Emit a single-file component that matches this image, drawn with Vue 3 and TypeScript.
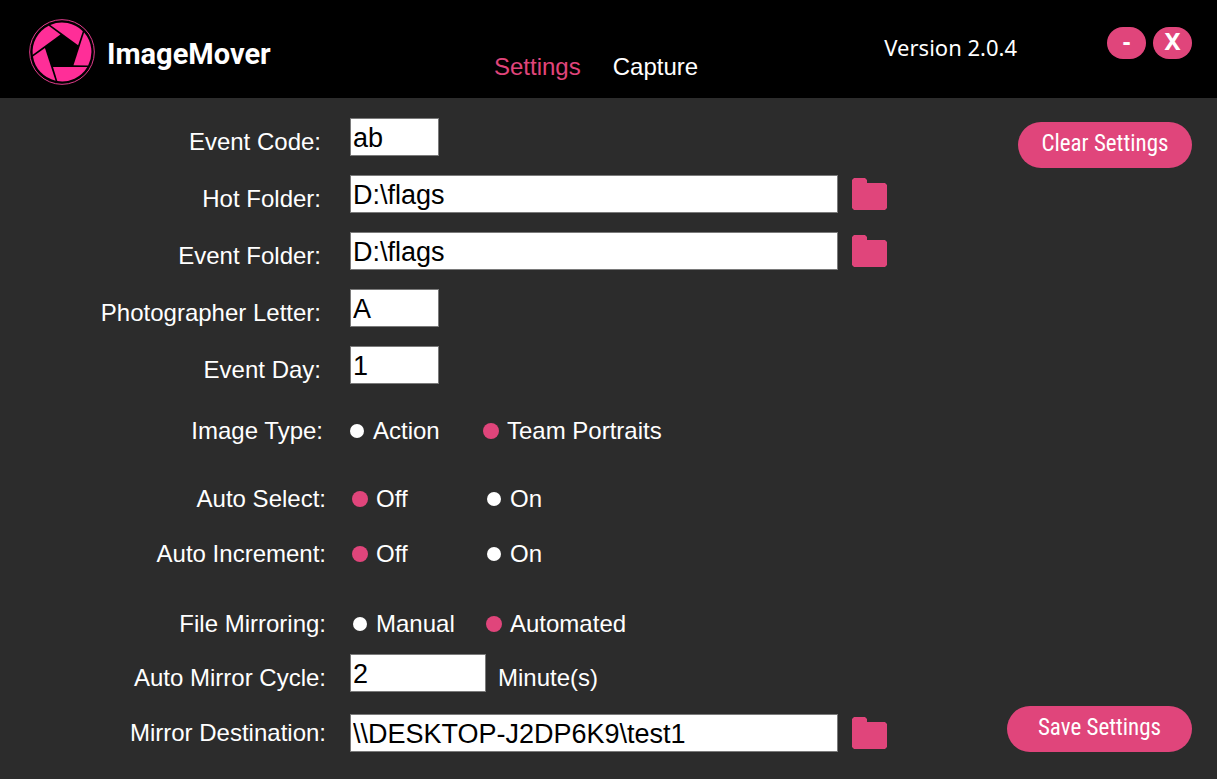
<script setup lang="ts">
import { reactive, ref } from 'vue'

interface Choice {
  key: 'imageType' | 'autoSelect' | 'autoIncrement' | 'mirroring'
  label: string
  options: string[]
}

const tabs = ['Settings', 'Capture']
const activeTab = ref('Settings')
const bladeAngles = [0, 72, 144, 216, 288]

const form = reactive({
  eventCode: 'ab',
  hotFolder: 'D:\\flags',
  eventFolder: 'D:\\flags',
  letter: 'A',
  day: '1',
  imageType: 'Team Portraits',
  autoSelect: 'Off',
  autoIncrement: 'Off',
  mirroring: 'Automated',
  cycle: '2',
  destination: '\\\\DESKTOP-J2DP6K9\\test1',
})

type TextKey = 'eventCode' | 'hotFolder' | 'eventFolder' | 'letter' | 'day'

const fields: { key: TextKey; label: string; folder: boolean }[] = [
  { key: 'eventCode', label: 'Event Code:', folder: false },
  { key: 'hotFolder', label: 'Hot Folder:', folder: true },
  { key: 'eventFolder', label: 'Event Folder:', folder: true },
  { key: 'letter', label: 'Photographer Letter:', folder: false },
  { key: 'day', label: 'Event Day:', folder: false },
]

const groups: { name: string; rows: Choice[] }[] = [
  { name: 'type', rows: [{ key: 'imageType', label: 'Image Type:', options: ['Action', 'Team Portraits'] }] },
  {
    name: 'auto',
    rows: [
      { key: 'autoSelect', label: 'Auto Select:', options: ['Off', 'On'] },
      { key: 'autoIncrement', label: 'Auto Increment:', options: ['Off', 'On'] },
    ],
  },
  { name: 'mirror', rows: [{ key: 'mirroring', label: 'File Mirroring:', options: ['Manual', 'Automated'] }] },
]

function clearSettings() {
  for (const f of fields) form[f.key] = ''
  form.cycle = ''
  form.destination = ''
}
</script>

<template>
  <div class="app">
    <header class="bar">
      <div class="brand">
        <svg class="logo" viewBox="9 8 198 198" aria-hidden="true">
          <circle cx="108" cy="107" r="97" fill="none" stroke="#e23c8c" stroke-width="3" />
          <path
            v-for="a in bladeAngles" :key="a" :transform="`rotate(${a} 108 107)`"
            d="M81 152H184A88 88 0 0 1 94 194Z" fill="#ff2e98"
          />
        </svg>
        <span class="name">ImageMover</span>
      </div>
      <nav class="tabs">
        <a
          v-for="t in tabs" :key="t" href="#" :class="{ active: t === activeTab }"
          @click.prevent="activeTab = t"
        >{{ t }}</a>
      </nav>
      <span class="version">Version 2.0.4</span>
      <div class="window">
        <button type="button" aria-label="Minimize">-</button>
        <button type="button" aria-label="Close">X</button>
      </div>
    </header>

    <form class="main" @submit.prevent>
      <div class="settings">
        <div class="fields">
          <div v-for="f in fields" :key="f.key" class="row">
            <label class="caption" :for="f.key">{{ f.label }}</label>
            <div class="control">
              <input
                :id="f.key" v-model="form[f.key]" type="text" class="text"
                :class="f.folder ? 'wide' : 'short'"
              >
              <button v-if="f.folder" type="button" class="folder" :aria-label="'Browse ' + f.label">
                <svg viewBox="0 0 35 32"><path d="M2 0H13L15 2V5H33L35 7V30L33 32H2L0 30V2Z" /></svg>
              </button>
            </div>
          </div>
        </div>

        <div v-for="g in groups" :key="g.name" class="choices" :class="g.name">
          <div
            v-for="c in g.rows" :key="c.key" class="row" role="radiogroup"
            :aria-labelledby="c.key"
          >
            <span :id="c.key" class="caption">{{ c.label }}</span>
            <div class="control">
              <label v-for="o in c.options" :key="o" class="option">
                <input v-model="form[c.key]" type="radio" :name="c.key" :value="o">
                <span>{{ o }}</span>
              </label>
            </div>
          </div>
        </div>

        <div class="paths">
          <div class="row">
            <label class="caption" for="cycle">Auto Mirror Cycle:</label>
            <div class="control">
              <input id="cycle" v-model="form.cycle" type="text" class="text medium">
              <span class="unit">Minute(s)</span>
            </div>
          </div>
          <div class="row centered">
            <label class="caption" for="destination">Mirror Destination:</label>
            <div class="control">
              <input id="destination" v-model="form.destination" type="text" class="text wide">
              <button type="button" class="folder" aria-label="Browse mirror destination">
                <svg viewBox="0 0 35 32"><path d="M2 0H13L15 2V5H33L35 7V30L33 32H2L0 30V2Z" /></svg>
              </button>
            </div>
          </div>
        </div>
      </div>

      <div class="actions">
        <button type="button" class="pill" @click="clearSettings">Clear Settings</button>
        <button type="submit" class="pill save">Save Settings</button>
      </div>
    </form>
  </div>
</template>

<style>
body {
  margin: 0;
  background: #2c2c2c;
}
</style>

<style scoped>
.app {
  --pink: #e0457b;
  display: flex;
  flex-direction: column;
  min-height: 100vh;
  background: #2c2c2c;
  color: #fff;
  font: 24px/28px "Liberation Sans", Arial, sans-serif;
}
.app * {
  box-sizing: border-box;
}
button,
input {
  margin: 0;
  font: inherit;
}
button {
  padding: 0;
  border: 0;
  background: var(--pink);
  color: #fff;
  cursor: pointer;
}
.bar {
  display: flex;
  align-items: flex-start;
  height: 98px;
  padding: 0 25px 0 29px;
  background: #000;
}
.brand {
  display: flex;
  align-items: center;
  gap: 12px;
  width: 465px;
  padding-top: 19px;
}
.logo {
  width: 66px;
  height: 66px;
}
.name {
  padding-top: 4px;
  font: bold 29px/32px Roboto, sans-serif;
}
.tabs {
  display: flex;
  gap: 32px;
  padding-top: 53px;
}
.tabs a {
  color: #fff;
  text-decoration: none;
}
.tabs a.active {
  color: var(--pink);
}
.version {
  margin-left: auto;
  padding-top: 33px;
  font-family: "Noto Sans", sans-serif;
  font-size: 22px;
}
.window {
  display: flex;
  gap: 7px;
  margin-left: 90px;
  padding-top: 27px;
}
.window button {
  width: 39px;
  height: 32px;
  padding-bottom: 4px;
  border-radius: 16px;
  font: bold 24px/28px "Noto Sans", sans-serif;
}
.main {
  display: flex;
  flex: 1;
  justify-content: space-between;
  padding: 20px 25px 28px 0;
}
.settings {
  display: flex;
  flex-direction: column;
}
.fields {
  display: flex;
  flex-direction: column;
  gap: 19px;
  margin-bottom: 33px;
}
.row {
  display: flex;
  align-items: flex-end;
  gap: 24px;
}
.centered {
  align-items: center;
}
.caption {
  width: 326px;
  text-align: right;
  white-space: nowrap;
}
.fields .row {
  gap: 29px;
}
.fields .caption {
  width: 321px;
}
.control {
  display: flex;
  align-items: center;
}
.text {
  height: 38px;
  padding: 2px 2px 0;
  border: 1px solid #7a7a7a;
  border-radius: 0;
  outline: 0;
  background: #fff;
  color: #000;
  font-size: 27px;
}
.short {
  width: 89px;
}
.medium {
  width: 136px;
}
.wide {
  width: 488px;
}
.folder {
  width: 35px;
  height: 32px;
  margin-left: 14px;
  background: none;
}
.folder svg {
  display: block;
  fill: var(--pink);
}
.choices {
  display: flex;
  flex-direction: column;
  gap: 27px;
}
.choices .row {
  gap: 26px;
}
.type {
  margin-bottom: 40px;
}
.type .caption {
  width: 323px;
}
.auto {
  margin-bottom: 42px;
}
.mirror {
  margin-bottom: 16px;
}
.option {
  display: flex;
  align-items: center;
  gap: 8px;
}
.option:first-child {
  width: 134px;
}
.option input {
  width: 14px;
  height: 14px;
  margin: 1px;
  border-radius: 50%;
  appearance: none;
  background: #fff;
}
.option input:checked {
  width: 16px;
  height: 16px;
  margin: 0;
  background: var(--pink);
}
.paths {
  display: flex;
  flex-direction: column;
  gap: 22px;
}
.unit {
  align-self: flex-end;
  margin-left: 12px;
}
.actions {
  display: flex;
  flex-direction: column;
  align-items: flex-end;
  justify-content: space-between;
  padding-top: 4px;
}
.pill {
  width: 174px;
  height: 46px;
  padding-bottom: 2px;
  border-radius: 23px;
  font: 23px/28px "Roboto Condensed", Roboto, sans-serif;
}
.save {
  width: 185px;
}
</style>
